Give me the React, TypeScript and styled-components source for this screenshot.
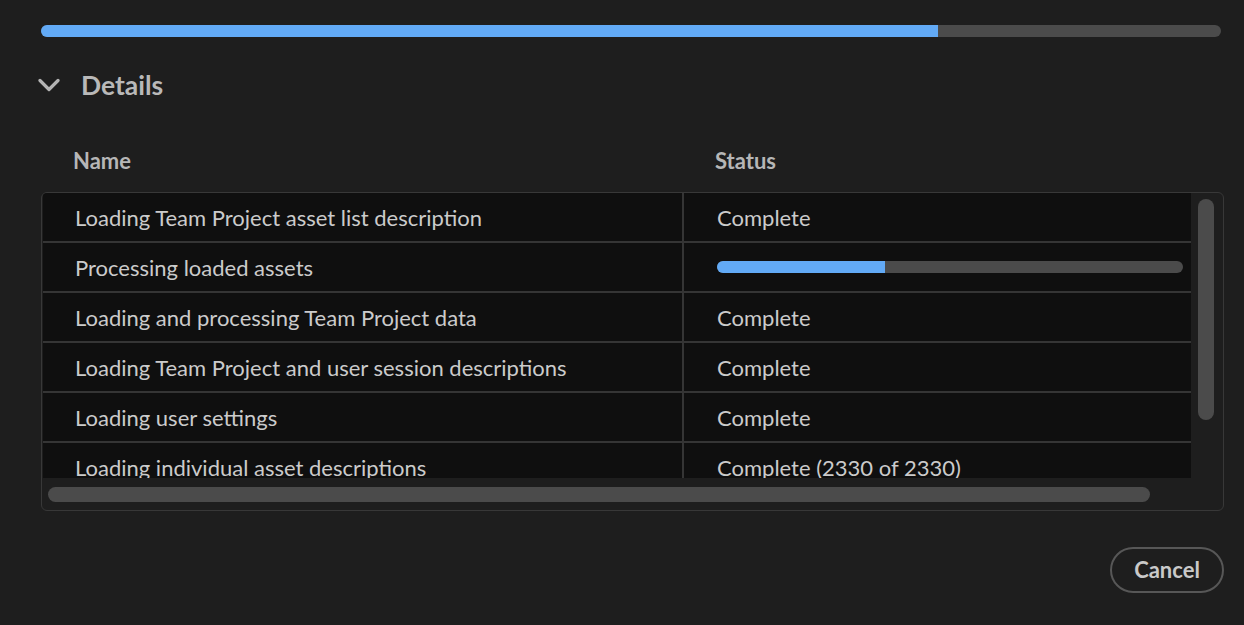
import React from "react";
import styled, { createGlobalStyle } from "styled-components";

const Global = createGlobalStyle`
  html, body { margin: 0; padding: 0; background: #1e1e1e; }
  body { font-family: Lato, "Open Sans", sans-serif; }
`;

const Page = styled.div`
  width: 1244px;
  height: 625px;
  box-sizing: border-box;
  padding: 25px 20px 0 41px;
  display: flex;
  flex-direction: column;
  background: #1e1e1e;
`;

const Track = styled.div<{ $h: number }>`
  height: ${(p) => p.$h}px;
  border-radius: ${(p) => p.$h / 2}px;
  background: #4b4b4b;
  overflow: hidden;
  display: flex;
`;

const Fill = styled.div`
  height: 100%;
  background: #62aaf6;
`;

const TopBar = styled.div`
  margin-right: 3px;
`;

const DetailsHeader = styled.div`
  display: flex;
  align-items: center;
  gap: 19px;
  margin: 33px 0 0 -3px;
  height: 30px;
`;

const DetailsTitle = styled.span`
  font-size: 26.5px;
  font-weight: 700;
  color: #b9b9b9;
`;

const ColHeader = styled.div`
  display: grid;
  grid-template-columns: 641px 1fr;
  margin-top: 45px;
  height: 30px;
  align-items: center;
  font-size: 22px;
  font-weight: 700;
  color: #b6b6b6;
`;

const ColLabel = styled.div<{ $pad: number }>`
  padding-left: ${(p) => p.$pad}px;
`;

const TableBox = styled.div`
  margin-top: 17px;
  height: 319px;
  box-sizing: border-box;
  border: 1px solid #383838;
  border-radius: 6px;
  background: #1e1e1e;
  display: flex;
  flex-direction: column;
  overflow: hidden;
`;

const Viewport = styled.div`
  display: flex;
  height: 285px;
`;

const Rows = styled.div`
  flex: 1;
  overflow: hidden;
  margin-left: 1px;
`;

const Row = styled.div`
  display: grid;
  grid-template-columns: 641px 1fr;
  height: 50px;
  box-sizing: border-box;
  border-bottom: 2px solid #353535;
  background: #0f0f0f;
`;

const Cell = styled.div<{ $divider?: boolean }>`
  display: flex;
  align-items: center;
  padding-left: ${(p) => (p.$divider ? 32 : 33)}px;
  padding-right: 8px;
  font-size: 22px;
  color: #cbcbcb;
  white-space: nowrap;
  border-right: ${(p) => (p.$divider ? "2px solid #353535" : "none")};
`;

const VScroll = styled.div`
  width: 32px;
  padding: 6px 0 0 7px;
  box-sizing: border-box;
`;

const VThumb = styled.div`
  width: 16px;
  height: 221px;
  border-radius: 8px;
  background: #4b4b4b;
`;

const HScroll = styled.div`
  flex: 1;
  padding: 9px 0 0 6px;
`;

const HThumb = styled.div`
  width: 1102px;
  height: 15px;
  border-radius: 8px;
  background: #4b4b4b;
`;

const RowBar = styled.div`
  flex: 1;
`;

const Footer = styled.div`
  display: flex;
  justify-content: flex-end;
  margin-top: 36px;
`;

const CancelButton = styled.button`
  width: 114px;
  height: 46px;
  border-radius: 23px;
  border: 2px solid #575757;
  background: transparent;
  color: #c9c9c9;
  font-family: Lato, "Open Sans", sans-serif;
  font-size: 22px;
  font-weight: 700;
  padding: 0 0 2px;
`;

const Chevron = () => (
  <svg width="24" height="18" viewBox="0 0 24 18">
    <path d="M2 4.5 L11 13.5 L20 4.5" fill="none" stroke="#b4b4b4" strokeWidth="3.2" strokeLinecap="round" strokeLinejoin="round" />
  </svg>
);

type Item = { name: string; status?: string; progress?: number };

const items: Item[] = [
  { name: "Loading Team Project asset list description", status: "Complete" },
  { name: "Processing loaded assets", progress: 0.36 },
  { name: "Loading and processing Team Project data", status: "Complete" },
  { name: "Loading Team Project and user session descriptions", status: "Complete" },
  { name: "Loading user settings", status: "Complete" },
  { name: "Loading individual asset descriptions", status: "Complete (2330 of 2330)" },
];

export default function App() {
  return (
    <>
      <Global />
      <Page>
        <TopBar>
          <Track $h={12}>
            <Fill style={{ width: "76%" }} />
          </Track>
        </TopBar>
        <DetailsHeader>
          <Chevron />
          <DetailsTitle>Details</DetailsTitle>
        </DetailsHeader>
        <ColHeader>
          <ColLabel $pad={32}>Name</ColLabel>
          <ColLabel $pad={33}>Status</ColLabel>
        </ColHeader>
        <TableBox>
          <Viewport>
            <Rows>
              {items.map((it) => (
                <Row key={it.name}>
                  <Cell $divider>{it.name}</Cell>
                  <Cell>
                    {it.progress !== undefined ? (
                      <RowBar>
                        <Track $h={12}>
                          <Fill style={{ width: `${it.progress * 100}%` }} />
                        </Track>
                      </RowBar>
                    ) : (
                      it.status
                    )}
                  </Cell>
                </Row>
              ))}
            </Rows>
            <VScroll>
              <VThumb />
            </VScroll>
          </Viewport>
          <HScroll>
            <HThumb />
          </HScroll>
        </TableBox>
        <Footer>
          <CancelButton>Cancel</CancelButton>
        </Footer>
      </Page>
    </>
  );
}
